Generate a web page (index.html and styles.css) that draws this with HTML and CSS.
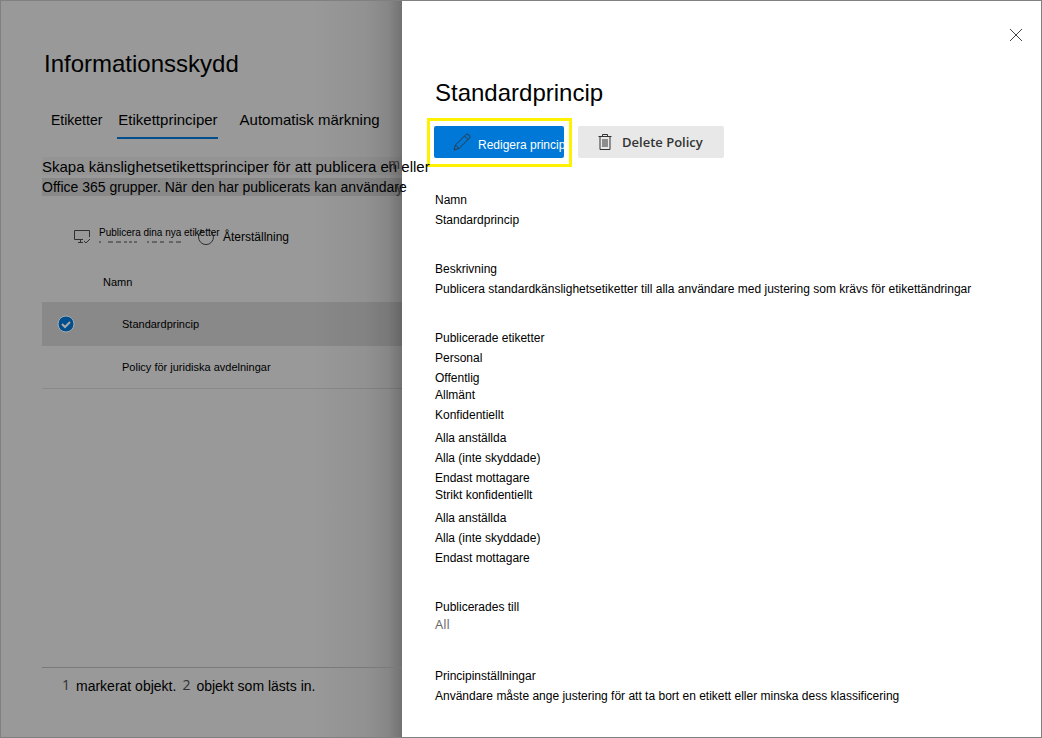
FILE: index.html
```html
<!DOCTYPE html>
<html lang="sv">
<head>
<meta charset="utf-8">
<title>Informationsskydd</title>
<link rel="stylesheet" href="styles.css">
</head>
<body>
<div class="app">
  <main class="page">
    <h1 class="page-title">Informationsskydd</h1>
    <nav class="tabs">
      <a class="tab tab-small" href="#etiketter">Etiketter</a>
      <a class="tab tab-active" href="#principer" aria-current="page">Etikettprinciper</a>
      <a class="tab tab-last" href="#automatisk">Automatisk märkning</a>
    </nav>
    <p class="intro">
      <span class="intro-line intro-first">Skapa känslighetsetikettsprinciper för att publicera en eller<span class="trace trace-m" aria-hidden="true">m</span></span>
      <span class="intro-line intro-second">Office 365 grupper. När den har publicerats kan användare<span class="trace trace-y" aria-hidden="true">y</span></span>
    </p>
    <div class="toolbar">
      <button class="tool" type="button">
        <svg class="tool-icon" width="17" height="14" viewBox="0 0 17 14" fill="none" stroke="#303030"><path d="M9 9.500H.5V.5H15.500V7M4 12.500H9M6.500 9.500V12.500M10 11L12 13L16 9"/></svg>
        <span class="publish-text">Publicera dina nya etiketter
          <svg class="publish-rule" width="84" height="2" viewBox="0 0 84 2" stroke="#303030"><path d="M0 1H2M9 1H14M17 1H22M25 1H28M30 1H33M35 1H38M48 1H50M53 1H58M61 1H65M70 1H74M77 1H82"/></svg>
        </span>
      </button>
      <button class="tool tool-reset" type="button">
        <svg width="18" height="18" viewBox="0 0 18 18" fill="none" stroke="#303030"><path d="M4 3.500A7.500 7.500 0 1 0 14 3.500M3 3H7M4 1V5M9 2H13"/></svg>
        <span>Återställning</span>
      </button>
    </div>
    <table class="policies">
      <thead><tr><th class="name-head" colspan="2">Namn</th></tr></thead>
      <tbody>
        <tr class="selected">
          <td class="mark"><svg width="18" height="18" viewBox="0 0 18 18" role="img" aria-label="Markerad"><circle cx="9" cy="9" r="8" fill="#004e8c" stroke="#a5acb2"/><path d="M5 9L8 12L13 7" fill="none" stroke="#aaa" stroke-width="2"/></svg></td>
          <td>Standardprincip</td>
        </tr>
        <tr><td class="mark"></td><td>Policy för juridiska avdelningar</td></tr>
      </tbody>
    </table>
    <footer class="status"><span class="count">1</span><span>markerat objekt.</span><span class="count">2</span><span>objekt som lästs in.</span></footer>
  </main>
  <aside class="panel">
    <button class="close" type="button" aria-label="Stäng"><svg width="14" height="14" viewBox="0 0 14 14" stroke="#444" fill="none"><path d="M1 1L13 13M13 1L1 13"/></svg></button>
    <h2 class="panel-title">Standardprincip</h2>
    <div class="actions">
      <div class="callout">
        <button class="btn btn-primary" type="button">
          <svg width="18" height="18" viewBox="0 0 18 18" fill="none" stroke="#303840"><path d="M1 17L2.500 12L13 1.500Q14.500 .5 16 2Q17.500 3.500 16.500 5L6 15.500ZM11.500 3L15 6.500M2.500 12L6 15.500"/></svg>
          <span class="primary-text">Redigera princip</span>
        </button>
      </div>
      <button class="btn btn-delete" type="button">
        <svg width="14" height="18" viewBox="0 0 14 18" fill="none" stroke="#333"><path d="M.5 3.500H13.500M4.500 3V1.500H9.500V3M2 3.500V16.500H12V3.500M5 6V14M7 6V14M9 6V14"/></svg>
        <span>Delete Policy</span>
      </button>
    </div>
    <dl class="details">
      <div><dt>Namn</dt><dd>Standardprincip</dd></div>
      <div><dt>Beskrivning</dt><dd>Publicera standardkänslighetsetiketter till alla användare med justering som krävs för etikettändringar</dd></div>
      <div><dt>Publicerade etiketter</dt><dd>
        <ul class="labels">
          <li>Personal</li>
          <li>Offentlig</li>
          <li class="group">Allmänt</li>
          <li>Konfidentiellt
            <ul class="sublabels"><li>Alla anställda</li><li>Alla (inte skyddade)</li><li>Endast mottagare</li></ul>
          </li>
          <li class="group">Strikt konfidentiellt
            <ul class="sublabels"><li>Alla anställda</li><li>Alla (inte skyddade)</li><li>Endast mottagare</li></ul>
          </li>
        </ul></dd></div>
      <div><dt>Publicerades till</dt><dd class="audience">All</dd></div>
      <div><dt>Principinställningar</dt><dd>Användare måste ange justering för att ta bort en etikett eller minska dess klassificering</dd></div>
    </dl>
  </aside>
</div>
</body>
</html>
```
FILE: styles.css
```css
* { box-sizing: border-box; }
body { margin: 0; font: 12px/20px "Liberation Sans", Arial, sans-serif; color: #000; }
h1, h2, p, dl, dd, ul { margin: 0; padding: 0; font-weight: normal; }
ul { list-style: none; }
button { border: 0; background: none; padding: 0; color: inherit; font: inherit; }
svg { flex: none; display: block; }

.app {
  display: grid;
  grid-template-columns: minmax(0, 401fr) minmax(0, 639fr);
  min-height: 100vh;
  border: 1px solid #808080;
}

/* Dimmed page behind the panel */
.page {
  position: relative;
  z-index: 1;
  display: flex;
  flex-direction: column;
  padding-left: 41px;
  background: #999 linear-gradient(to right, transparent calc(100% - 90px), rgba(0, 0, 0, .05) calc(100% - 36px), rgba(0, 0, 0, .12) calc(100% - 14px), rgba(0, 0, 0, .26));
}
.page-title { padding: 47px 0 0 2px; font-size: 24px; line-height: 32px; }
.tabs { display: flex; padding: 28px 0 0 9px; }
.tab { height: 31px; font-size: 15px; line-height: 24px; color: #000; text-decoration: none; white-space: nowrap; }
.tab-small { font-size: 14px; }
.tab-active { margin-left: 15px; padding: 0 0 0 1px; border-bottom: 2px solid #004e8c; }
.tab-last { margin-left: 22px; }
.intro { display: grid; grid-template-columns: minmax(0, 1fr); gap: 3px; padding-top: 18px; }
.intro-line { position: relative; height: 18px; font-size: 14px; line-height: 20px; white-space: nowrap; }
.intro-first { background: rgba(0, 0, 0, .03); font-size: 15px; }
.intro-second { background: rgba(0, 0, 0, .1); line-height: 18px; }
.trace { position: absolute; color: #303030; font-size: 14px; }
.trace-m { right: 2px; bottom: 1px; }
.trace-y { right: -1px; top: 1px; }

.toolbar { display: flex; align-items: flex-start; height: 69px; padding: 28px 0 0 32px; }
.tool { display: flex; align-items: center; height: 26px; white-space: nowrap; }
.tool-icon { margin-right: 8px; }
.publish-text { position: relative; width: 98px; padding-bottom: 8px; font-size: 10px; line-height: 18px; text-align: left; }
.publish-rule { position: absolute; left: 0; bottom: 7px; }
.tool-reset { gap: 8px; font-size: 12px; }

.policies { width: 100%; border-collapse: collapse; font-size: 11px; }
.name-head { height: 37px; padding: 0 0 3px 61px; text-align: left; font-weight: normal; }
.policies td { height: 43px; padding: 1px 0 0; border-bottom: 1px solid rgba(0, 0, 0, .1); }
.policies .mark { width: 80px; padding-left: 15px; }
.selected { background: rgba(0, 0, 0, .1); }

.status { display: flex; margin-top: auto; height: 70px; padding: 7px 0 0 20px; border-top: 1px solid #7a7a7a; font-size: 14px; line-height: 22px; white-space: nowrap; }
.count { width: 14px; font-family: "Open Sans", sans-serif; line-height: 20px; color: #303030; }
.count + span { margin-right: 6px; }

/* Details panel */
.panel { display: flex; flex-direction: column; padding: 24px 15px 31px 25px; background: #fff; }
.close { display: grid; place-items: center; align-self: flex-end; width: 20px; height: 20px; }
.panel-title { padding: 32px 0 0 8px; font-size: 24px; line-height: 32px; }
.actions { display: flex; align-items: flex-start; gap: 6px; padding-top: 9px; }
.callout { border: 3px solid #fff200; padding: 5px 5px 6px 4px; }
.btn { display: flex; align-items: center; height: 32px; border-radius: 2px; white-space: nowrap; }
.btn-primary { width: 130px; gap: 7px; padding-left: 19px; overflow: hidden; background: #0078d7; color: #fff; }
.primary-text { padding-top: 5px; }
.btn-delete { width: 146px; gap: 10px; margin-top: 8px; padding-left: 20px; background: #e8e8e8; color: #333; font: 600 13px/20px "Open Sans", sans-serif; }
.details { display: grid; gap: 29px; padding: 23px 0 0 8px; }
.group { margin-top: -3px; }
.sublabels { margin-top: 3px; }
.audience { margin: -3px 0 3px; font: 13px/20px "Open Sans", sans-serif; color: #666; }
```
